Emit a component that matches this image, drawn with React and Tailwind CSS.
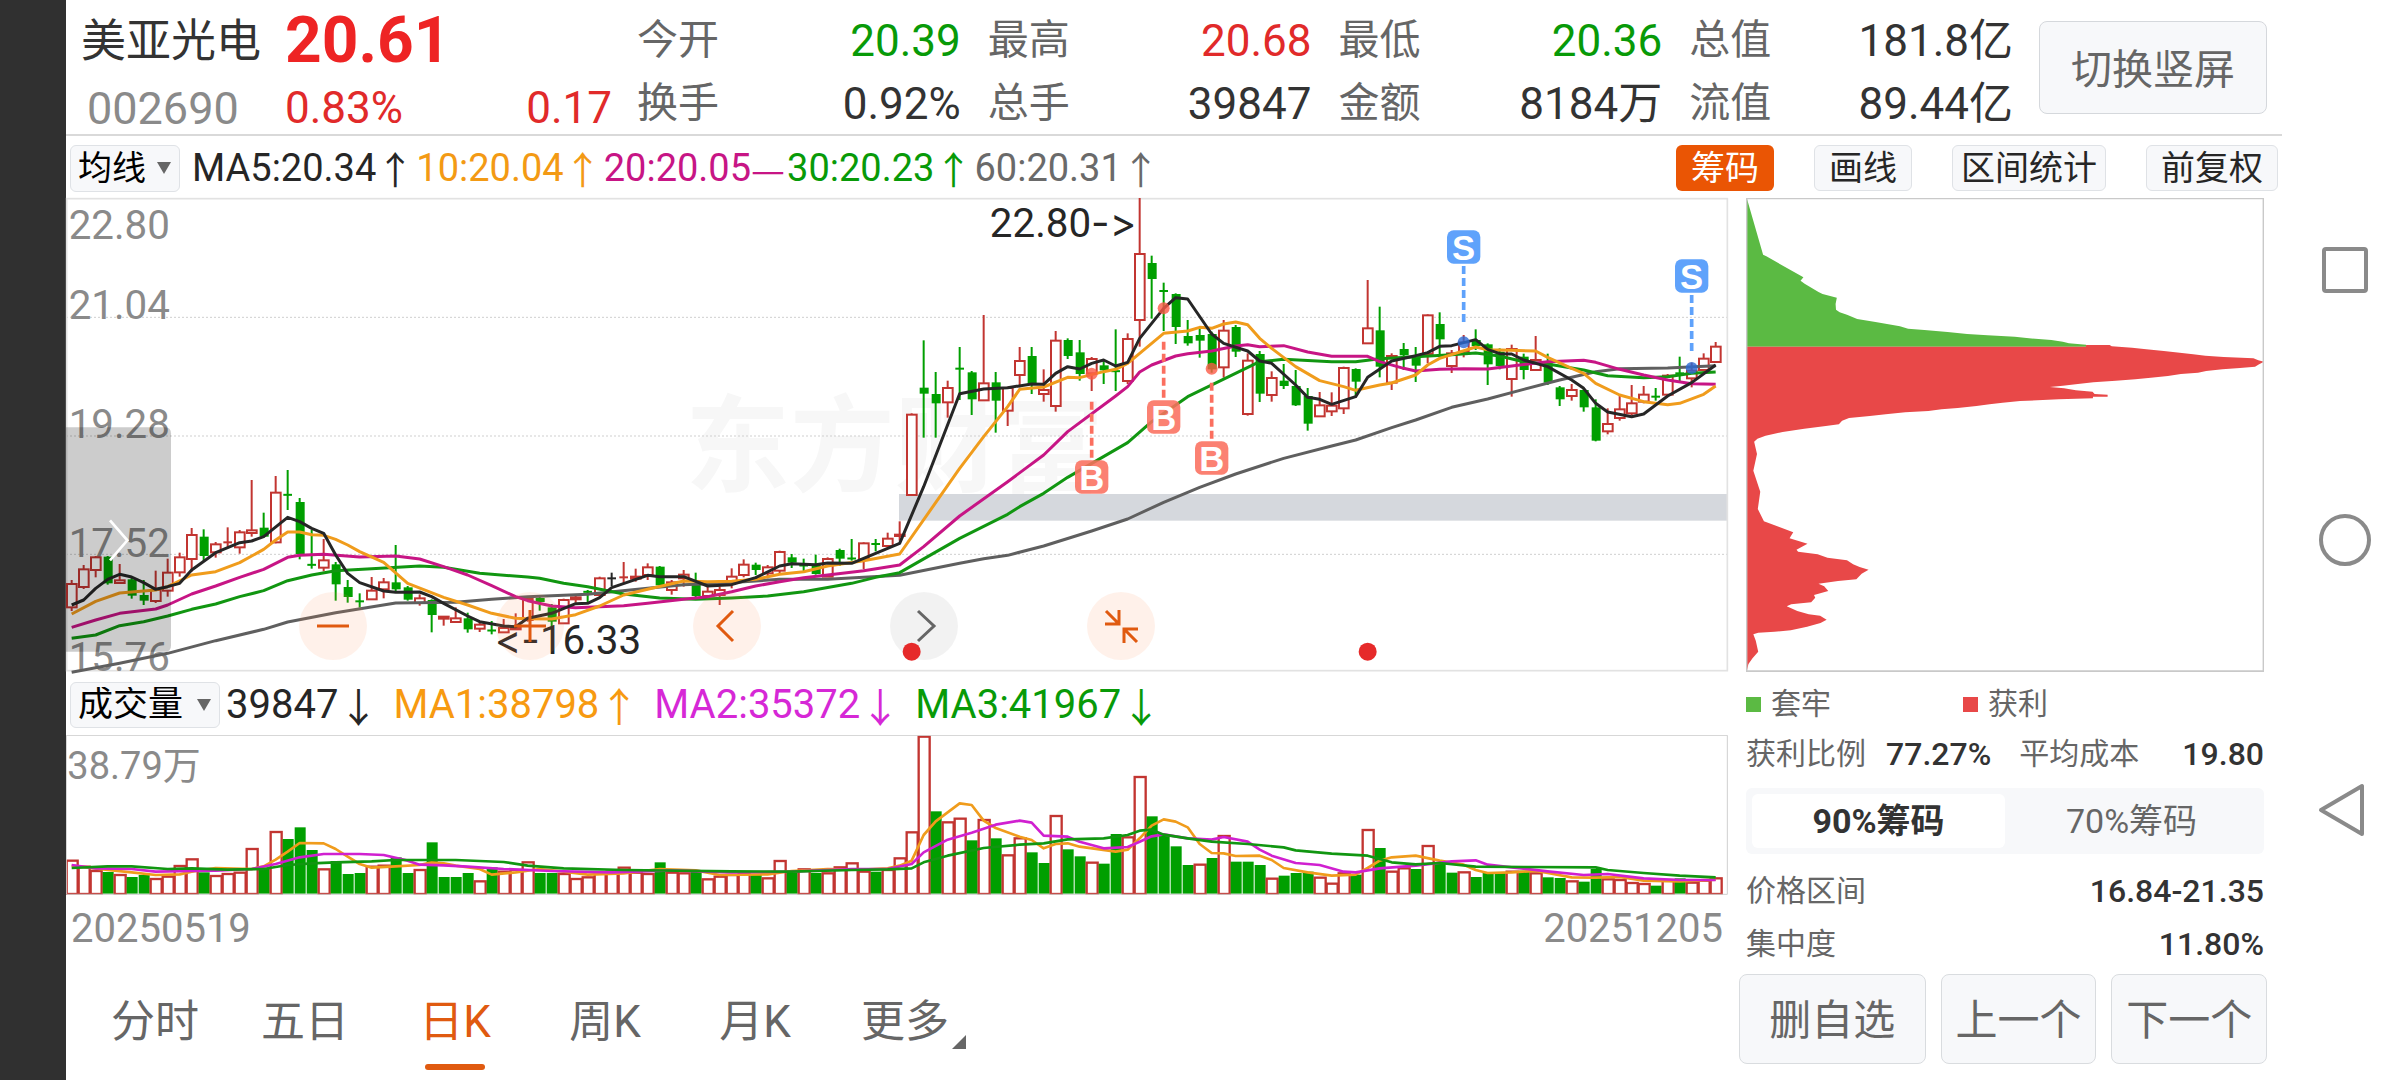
import React, { useState } from "react";

const RED = "#c23531";
const GREEN = "#009f00";
const INK = "#262626";

/* Candles: [colour, high, body top, body bottom, low]. The first block is measured from y = 726, the second from y = 6. */
const LOW_BLOCK = [
  ["r", 420, 430, 502, 513], ["r", 375, 386, 441, 447], ["r", 348, 350, 390, 412], ["g", 348, 350, 430, 434],
  ["r", 372, 419, 429, 430], ["g", 410, 418, 467, 476], ["g", 420, 465, 482, 495], ["r", 392, 448, 483, 489],
  ["r", 356, 396, 452, 470], ["r", 338, 350, 397, 410], ["r", 264, 283, 357, 395], ["g", 268, 290, 348, 362],
  ["r", 306, 311, 337, 353], ["r", 262, 305, 309, 320], ["r", 270, 275, 322, 341], ["r", 120, 269, 279, 290],
  ["g", 218, 263, 290, 292], ["r", 108, 156, 307, 310], ["g", 90, 163, 166, 210], ["g", 174, 186, 342, 358],
  ["g", 270, 372, 377, 386], ["r", 297, 359, 383, 394], ["g", 366, 373, 433, 482], ["g", 420, 441, 471, 488],
  ["g", 460, 482, 486, 503], ["r", 411, 450, 478, 480], ["r", 414, 425, 448, 475], ["g", 315, 427, 448, 455],
  ["g", 438, 442, 479, 482], ["r", 463, 473, 489, 497], ["g", 478, 480, 525, 577], ["r", 528, 528, 536, 557],
  ["r", 502, 533, 546, 548], ["g", 518, 535, 568, 578], ["r", 545, 552, 566, 576], ["g", 543, 569, 574, 583],
  ["r", 537, 562, 577, 577], ["r", 520, 560, 568, 568], ["r", 472, 475, 540, 545], ["g", 470, 474, 486, 512],
  ["g", 492, 502, 545, 560], ["r", 476, 478, 550, 552], ["r", 464, 470, 478, 488], ["g", 450, 453, 458, 487],
  ["r", 410, 413, 465, 470], ["k", 398, 413, 417, 438], ["r", 366, 410, 414, 430], ["r", 386, 408, 416, 425],
  ["r", 370, 380, 405, 420], ["g", 378, 380, 436, 440], ["r", 420, 425, 450, 464], ["r", 390, 402, 415, 440],
  ["g", 398, 435, 468, 472], ["r", 440, 453, 468, 473], ["r", 440, 448, 465, 495], ["r", 385, 408, 425, 445],
  ["r", 358, 372, 405, 412], ["g", 368, 374, 390, 405], ["r", 375, 380, 400, 415], ["r", 332, 334, 392, 405],
  ["g", 342, 352, 368, 384], ["g", 356, 375, 378, 395], ["g", 344, 375, 402, 404], ["r", 352, 355, 410, 410],
  ["g", 326, 330, 356, 378], ["g", 297, 354, 357, 362], ["r", 307, 308, 358, 388], ["g", 297, 310, 314, 334],
  ["r", 278, 294, 318, 322], ["r", 244, 282, 288, 302],
];
const HIGH_BLOCK = [
  ["r", 640, 642, 885, 886], ["g", 421, 563, 581, 713], ["g", 516, 582, 610, 713], ["r", 542, 562, 607, 653],
  ["g", 441, 504, 508, 600], ["g", 513, 517, 598, 645], ["r", 345, 548, 601, 603], ["g", 516, 547, 602, 698],
  ["r", 560, 562, 632, 678], ["r", 441, 481, 525, 562], ["g", 441, 468, 552, 582], ["r", 508, 568, 582, 605],
  ["r", 393, 420, 618, 635], ["g", 415, 420, 468, 477], ["g", 420, 457, 522, 542], ["r", 471, 475, 520, 573],
  ["g", 480, 496, 511, 552], ["g", 388, 512, 515, 573], ["r", 400, 415, 543, 552], ["r", -6, 160, 360, 440],
  ["g", 167, 189, 237, 356], ["g", 248, 271, 275, 393], ["g", 280, 282, 381, 432], ["g", 360, 408, 430, 437],
  ["g", 385, 405, 422, 473], ["g", 395, 402, 508, 518], ["r", 360, 390, 502, 533], ["g", 375, 381, 455, 471],
  ["r", 460, 480, 642, 647], ["g", 453, 462, 581, 606], ["r", 514, 532, 585, 605], ["g", 492, 542, 558, 567],
  ["g", 510, 558, 616, 618], ["g", 564, 588, 671, 692], ["r", 576, 614, 649, 650], ["r", 577, 615, 634, 648],
  ["r", 500, 502, 625, 642], ["g", 505, 507, 545, 590], ["r", 240, 383, 430, 432], ["g", 320, 391, 500, 532],
  ["r", 460, 466, 548, 570], ["g", 429, 447, 466, 510], ["g", 441, 472, 497, 546], ["r", 343, 344, 462, 490],
  ["g", 337, 372, 418, 465], ["r", 450, 458, 498, 519], ["r", 405, 425, 455, 472], ["g", 388, 420, 438, 450],
  ["g", 430, 433, 493, 555], ["g", 445, 455, 498, 508], ["r", 434, 445, 537, 590], ["g", 461, 470, 510, 538],
  ["r", 408, 478, 510, 512], ["g", 461, 490, 548, 555], ["g", 558, 562, 598, 618], ["r", 552, 568, 588, 602],
  ["g", 566, 570, 622, 635], ["g", 598, 622, 722, 724], ["r", 625, 670, 694, 703], ["r", 585, 626, 654, 662],
  ["r", 555, 608, 640, 645], ["r", 558, 582, 605, 610], ["g", 564, 588, 592, 602], ["r", 522, 525, 584, 586],
  ["g", 470, 518, 522, 545], ["r", 488, 510, 535, 562], ["r", 460, 474, 510, 515], ["r", 426, 438, 486, 488],
];
const shift = (rows, d) => rows.map(([c, ...v]) => [c, ...v.map((n) => n + d)]);
const CANDLES = [...shift(LOW_BLOCK, 726), ...shift(HIGH_BLOCK, 6)];

/* Moving averages: day index, value, day index, value ... in the same two blocks. */
const AVERAGES = [
  {
    color: "#5f5f5f",
    low: [0, 697, 4, 670, 8, 640, 12, 602, 16, 568, 18, 546, 22, 518, 27, 489, 32, 487, 35, 478, 38, 470, 43, 463, 48, 445, 51, 434, 54, 430, 59, 418, 63, 418],
    high: [69, 1126, 74, 1090, 76, 1076, 78, 1066, 81, 1038, 85, 993, 88, 957, 91, 907, 94, 862, 97, 822, 101, 775, 105, 738, 107, 720, 110, 683, 112, 660, 115, 622, 118, 597, 121, 568, 124, 540, 127, 515, 129, 506, 133, 504, 137, 497],
  },
  {
    color: "#119611",
    low: [0, 595, 2, 585, 4, 557, 6, 545, 8, 528, 10, 508, 12, 492, 14, 470, 16, 452, 18, 422, 20, 405, 22, 392, 25, 386, 29, 378, 31, 382, 34, 400, 38, 411, 39, 415, 41, 430, 43, 440, 46, 462, 49, 474, 52, 478, 55, 474, 58, 468, 61, 455, 65, 430, 67, 412],
    high: [69, 1118, 74, 1015, 78, 943, 79, 920, 81, 880, 83, 832, 88, 728, 90, 665, 93, 590, 99, 485, 101, 478, 105, 485, 107, 485, 109, 476, 112, 470, 115, 464, 117, 459, 119, 468, 121, 485, 123, 492, 126, 510, 128, 527, 131, 533, 133, 530, 135, 520, 137, 516],
  },
  {
    color: "#c71585",
    low: [0, 562, 2, 540, 4, 520, 7, 507, 8, 495, 10, 462, 12, 438, 14, 412, 16, 388, 18, 352, 19, 346, 21, 343, 24, 351, 27, 348, 29, 357, 31, 380, 33, 405, 35, 437, 37, 470, 38, 482, 40, 498, 42, 503, 46, 497, 48, 490, 51, 478, 53, 470, 55, 455, 57, 438, 59, 425, 61, 413, 63, 405, 66, 392],
    high: [69, 1095, 71, 1040, 74, 948, 78, 845, 81, 765, 83, 695, 87, 588, 88, 560, 89, 516, 90, 495, 92, 468, 93, 461, 95, 453, 97, 438, 98, 434, 99, 440, 101, 437, 103, 456, 105, 469, 108, 469, 109, 485, 111, 505, 112, 513, 114, 508, 116, 506, 118, 507, 120, 498, 123, 485, 126, 481, 127, 487, 129, 508, 131, 525, 133, 540, 135, 551, 137, 553],
  },
  {
    color: "#f09c1c",
    low: [0, 522, 2, 484, 4, 459, 7, 450, 8, 440, 10, 405, 12, 395, 14, 368, 16, 328, 17, 300, 18, 276, 19, 276, 20, 284, 21, 286, 22, 298, 23, 315, 24, 335, 26, 367, 28, 430, 31, 472, 33, 495, 35, 520, 37, 535, 38, 536, 40, 537, 42, 524, 44, 498, 46, 465, 48, 448, 51, 423, 53, 425, 55, 424, 57, 418, 59, 403, 61, 395, 63, 378, 66, 362],
    high: [69, 1062, 74, 805, 76, 710, 78, 620, 79, 568, 81, 561, 83, 532, 84, 533, 86, 515, 87, 508, 88, 490, 91, 400, 93, 393, 94, 382, 95, 385, 96, 372, 97, 366, 98, 374, 99, 415, 100, 445, 102, 500, 104, 542, 106, 560, 107, 571, 109, 555, 110, 549, 112, 525, 113, 495, 114, 475, 117, 441, 118, 449, 120, 451, 122, 453, 123, 472, 125, 505, 126, 520, 127, 550, 129, 585, 131, 605, 133, 614, 134, 610, 136, 583, 137, 558],
  },
  {
    color: INK,
    low: [0, 495, 1, 480, 2, 445, 3, 418, 4, 403, 5, 411, 6, 428, 7, 448, 8, 440, 9, 430, 10, 390, 12, 338, 14, 308, 15, 303, 16, 290, 18, 232, 19, 245, 20, 265, 21, 280, 22, 345, 23, 400, 24, 428, 26, 453, 27, 457, 29, 456, 30, 470, 31, 490, 33, 528, 34, 545, 36, 558, 37, 560, 38, 535, 40, 520, 42, 491, 43, 490, 44, 473, 45, 443, 48, 406, 49, 410, 51, 410, 53, 438, 55, 434, 57, 413, 59, 378, 60, 371, 62, 374, 63, 369, 65, 370, 66, 355],
    high: [69, 1030, 71, 860, 74, 581, 76, 567, 78, 563, 80, 552, 81, 553, 82, 520, 83, 500, 84, 507, 85, 490, 86, 480, 87, 498, 88, 487, 89, 415, 91, 325, 92, 293, 93, 297, 95, 402, 96, 430, 98, 453, 99, 483, 100, 490, 102, 555, 103, 592, 104, 598, 105, 613, 107, 590, 108, 532, 110, 483, 112, 467, 113, 458, 114, 439, 115, 437, 117, 419, 118, 448, 119, 461, 120, 462, 121, 480, 123, 500, 125, 540, 126, 565, 127, 610, 128, 636, 130, 650, 131, 642, 133, 588, 135, 548, 137, 495],
  },
];

const dayX = (i) => 17 + 36 * i;
const trace = (list, d) => {
  const out = [];
  for (let k = 0; k < list.length; k += 2) out.push(dayX(list[k]) + "," + (list[k + 1] + d));
  return out.join(" ");
};

/* Volume bar tops; the two blocks are measured from y = -198 and y = -78. */
const VOLUME_LOW = "r572 r590 r603 g609 r615 g624 g618 r627 r620 r588 r568 g610 r618 r612 r608 r537 g600 r486 g510 g475 g543 r598 g576 g615 g612 r590 r587 g565 g612 r600 g520 g624 g624 g612 r634 g595 r605 r600 r577 g612 g612 r612 r627 r622 r610 r605 r593 r608 r612 g580 r608 r610 g605 r628 r620 r615 r612 g615 r625 r573 g610 r598 g612 r610 r592 r580 r605 g608 r600 r565".split(" ");
const VOLUME_HIGH = "r367 r80 g307 r337 r326 g394 r330 g388 r436 r385 g430 g462 r318 g421 g442 r458 g464 g375 r382 r201 g322 g378 g412 g468 r464 g447 r378 g458 g458 g468 r506 g500 g492 g488 r503 r521 r490 g497 r360 g417 r485 r475 g480 r408 g463 g491 r487 g504 g491 g490 r485 g485 r490 g505 g507 r514 g518 g480 r508 r510 r519 r522 g530 r510 g508 r518 r512 r505".split(" ");
const VOLUMES = [
  ...VOLUME_LOW.map((s) => [s[0], Number(s.slice(1)) - 198]),
  ...VOLUME_HIGH.map((s) => [s[0], Number(s.slice(1)) - 78]),
];
const VOLUME_AVERAGES = [
  {
    color: "#f09c1c",
    low: [0, 590, 3, 603, 5, 610, 7, 618, 9, 616, 10, 608, 12, 597, 15, 600, 16, 592, 17, 572, 18, 548, 19, 522, 21, 523, 22, 540, 23, 563, 24, 585, 25, 596, 27, 592, 29, 588, 30, 580, 31, 583, 32, 590, 34, 600, 35, 617, 37, 610, 39, 600, 41, 608, 43, 617, 46, 613, 49, 600, 52, 604, 54, 618, 58, 616, 60, 606, 63, 600, 66, 602, 68, 598],
    high: [69, 470, 70, 455, 71, 378, 72, 337, 74, 283, 75, 288, 76, 335, 77, 357, 79, 383, 80, 393, 81, 418, 82, 405, 83, 403, 84, 413, 87, 428, 88, 422, 89, 388, 90, 350, 91, 331, 92, 338, 93, 355, 94, 405, 95, 432, 96, 433, 97, 441, 99, 440, 100, 453, 101, 477, 103, 490, 105, 500, 107, 497, 108, 477, 109, 455, 110, 445, 112, 440, 114, 455, 116, 467, 117, 483, 118, 492, 120, 490, 122, 486, 123, 492, 125, 505, 127, 506, 129, 504, 131, 515, 134, 517, 137, 512],
  },
  {
    color: "#d020d0",
    low: [0, 588, 2, 598, 5, 600, 7, 608, 10, 606, 12, 605, 15, 600, 17, 585, 19, 565, 21, 555, 24, 555, 26, 558, 28, 575, 29, 587, 31, 589, 33, 593, 36, 600, 40, 606, 45, 610, 50, 604, 55, 610, 60, 608, 65, 600, 68, 600],
    high: [70, 465, 71, 430, 73, 392, 75, 371, 77, 347, 79, 335, 80, 341, 81, 380, 83, 383, 84, 398, 86, 418, 88, 414, 89, 398, 90, 382, 91, 376, 93, 388, 95, 392, 96, 384, 98, 398, 99, 422, 100, 440, 102, 462, 104, 468, 106, 488, 107, 490, 109, 478, 112, 470, 115, 457, 117, 454, 118, 467, 120, 475, 123, 487, 126, 498, 128, 495, 131, 508, 134, 513, 137, 513],
  },
  {
    color: "#119611",
    low: [0, 597, 3, 592, 5, 592, 8, 600, 10, 598, 13, 602, 16, 600, 18, 588, 20, 583, 22, 580, 25, 577, 27, 573, 32, 573, 36, 579, 38, 590, 41, 598, 46, 603, 55, 607, 60, 608, 65, 603, 68, 601],
    high: [70, 478, 71, 460, 73, 440, 76, 417, 79, 407, 81, 403, 83, 391, 86, 388, 88, 378, 89, 365, 90, 362, 91, 377, 93, 388, 95, 398, 98, 405, 101, 415, 102, 424, 105, 434, 108, 440, 110, 460, 112, 466, 114, 462, 117, 473, 121, 474, 127, 475, 128, 483, 131, 492, 134, 500, 137, 505],
  },
];

const AXIS = [["22.80", 123], ["21.04", 364], ["19.28", 719], ["17.52", 1076], ["15.76", 1418]];

const TRADES = [
  { day: 85, label: "B", box: 837, dot: 527, from: 611, to: 784 },
  { day: 91, label: "B", box: 657, dot: 331, from: 431, to: 604 },
  { day: 95, label: "B", box: 780, dot: 512, from: 554, to: 727 },
  { day: 116, label: "S", box: 147, dot: 433, from: 204, to: 374 },
  { day: 135, label: "S", box: 234, dot: 510, from: 291, to: 461 },
];

function Candle({ row, i }) {
  const [c, high, top, bottom, low] = row;
  const x = dayX(i);
  const color = c === "r" ? RED : c === "g" ? GREEN : INK;
  const flat = bottom - top < 6;
  const hollow = c === "r" && !flat;
  return (
    <g stroke={color} strokeWidth="6" fill={hollow ? "#fff" : color}>
      <line x1={x} x2={x} y1={high} y2={low} />
      {flat ? (
        <line x1={x - 13} x2={x + 13} y1={(top + bottom) / 2} y2={(top + bottom) / 2} />
      ) : hollow ? (
        <rect x={x - 14} y={top + 2} width="29" height={bottom - top - 2} />
      ) : (
        <rect x={x - 12} y={top} width="27" height={bottom - top} stroke="none" />
      )}
    </g>
  );
}

function PriceChart() {
  return (
    <svg viewBox="0 0 4986 1422" className="block h-auto w-full overflow-visible" role="img" aria-label="日K线图">
      <g fill="#f7f7f7" fontSize="314" fontWeight="700" fontFamily="'Noto Sans CJK SC', sans-serif">
        <text x="1858" y="856">东方财富</text>
      </g>
      <rect x="2499" y="888" width="2487" height="80" fill="#d5d8dd" />
      <g stroke="#cfcfcf" strokeWidth="3" strokeDasharray="6 6">
        {[358, 714, 1069].map((y) => <line key={y} x1="0" x2="4986" y1={y} y2={y} />)}
      </g>
      <rect x="2" y="2" width="4982" height="1416" fill="none" stroke="#e2e2e2" strokeWidth="5" />
      <g fill="#8a8a8a" fontSize="121" fontFamily="Roboto, sans-serif">
        {AXIS.map(([t, y]) => <text key={t} x="8" y={y}>{t}</text>)}
      </g>
      {CANDLES.map((row, i) => <Candle key={i} row={row} i={i} />)}
      <g fill="none" strokeWidth="9" strokeLinejoin="round">
        {AVERAGES.map((a) => (
          <polyline key={a.color} stroke={a.color} points={trace(a.low, 726) + " " + trace(a.high, 6)} />
        ))}
      </g>
      <g fill={INK} fontSize="121" fontFamily="Roboto, sans-serif" className="[font-variant-ligatures:none]">
        <text x="3211" y="116" textAnchor="end">22.80<tspan fontFamily="Inter, sans-serif">-&gt;</tspan></text>
        <text x="1286" y="1368"><tspan fontFamily="Inter, sans-serif">&lt;-</tspan>16.33</text>
      </g>
      {TRADES.map((t) => {
        const x = dayX(t.day);
        const sell = t.label === "S";
        const color = sell ? "#5fa2fb" : "#fb6f5f";
        return (
          <g key={t.day}>
            <circle cx={x} cy={t.dot} r="18" fill={sell ? "#2c6ad4" : "#fb5a46"} fillOpacity="0.8" />
            <line x1={x} x2={x} y1={t.from} y2={t.to} stroke={color} strokeWidth="11" strokeDasharray="24 12" />
            <rect x={x - 50} y={t.box - 50} width="100" height="100" rx="20" fill={color} fillOpacity={sell ? 1 : 0.88} />
            <text x={x} y={t.box + 38} fill="#fff" fontSize="104" fontWeight="700" textAnchor="middle" fontFamily="'Liberation Sans', sans-serif">
              {t.label}
            </text>
          </g>
        );
      })}
      <path d="M0 688H297Q315 688 315 706V1343Q315 1361 297 1361H0Z" fill="#000" fillOpacity="0.2" />
      <path d="M132 967L184 1027L132 1087" fill="none" stroke="#fff" strokeWidth="8" />
    </svg>
  );
}

function ChartEvents() {
  return (
    <svg viewBox="0 0 4986 1422" className="pointer-events-none absolute inset-0 h-full w-full" aria-hidden="true">
      <circle cx={dayX(70)} cy="1361" r="27" fill="#e62a2a" />
      <circle cx={dayX(108)} cy="1361" r="27" fill="#e62a2a" />
    </svg>
  );
}

const CONTROLS = [
  { name: "缩小", d: "M18 34H50" },
  { name: "放大", d: "M18 34H50M34 18V50" },
  { name: "左移", d: "M40 19L25 34L40 49" },
  { name: "右移", d: "M28 19L44 34L28 49", grey: true },
  { name: "收起", d: "M19 19L32 32M32 18V32H18M50 50L37 37M37 51V37H51" },
];

function ChartControls() {
  return (
    <div className="absolute bottom-3 left-[14%] flex gap-[129px]">
      {CONTROLS.map((c) => (
        <button
          key={c.name}
          aria-label={c.name}
          className={"size-[68px] rounded-full " + (c.grey ? "bg-black/5 text-[#666]" : "bg-[#ff8a50]/12 text-[#e05a10]")}
        >
          <svg viewBox="0 0 68 68" className="size-full" fill="none" stroke="currentColor" strokeWidth="3">
            <path d={c.d} />
          </svg>
        </button>
      ))}
    </div>
  );
}

function VolumeChart() {
  return (
    <svg viewBox="0 0 4986 480" className="block h-auto w-full" role="img" aria-label="成交量图">
      <text x="4" y="132" fill="#8a8a8a" fontSize="114" fontFamily="Roboto, 'Noto Sans CJK SC', sans-serif">38.79万</text>
      {VOLUMES.map(([c, top], i) => {
        const x = dayX(i);
        return c === "r" ? (
          <rect key={i} x={x - 15} y={top + 3} width="33" height={474 - top} fill="#fff" stroke={RED} strokeWidth="7" />
        ) : (
          <rect key={i} x={x - 15} y={top} width="33" height={476 - top} fill={GREEN} />
        );
      })}
      <g fill="none" strokeWidth="8" strokeLinejoin="round">
        {VOLUME_AVERAGES.map((a) => (
          <polyline key={a.color} stroke={a.color} points={trace(a.low, -198) + " " + trace(a.high, -78)} />
        ))}
      </g>
      <path d="M1 1H4984V478H1Z" fill="none" stroke="#cfcfcf" strokeWidth="3" />
    </svg>
  );
}

function ChipChart() {
  return (
    <svg viewBox="62 27 1272 1422" preserveAspectRatio="none" className="block h-[474px] w-full" role="img" aria-label="筹码分布">
      <path
        fill="#5bba43"
        d="M64 28L104 197L112 202L203 265L196 275L206 284L240 309L250 315L285 326L282 345L283 362L292 370L310 377L335 390L380 399L440 412L460 419L500 423L557 429L605 435L655 439L722 443L757 448L812 453L840 458L855 463L897 467V473H64Z"
      />
      <path
        fill="#e84848"
        d="M64 473H897V468H955L960 472L1010 476L1045 481L1088 486L1127 491L1160 496L1190 500L1235 504L1308 508L1320 514L1334 518L1322 526L1312 533L1275 537L1232 541L1192 546L1172 551L1130 555L1098 561L1056 566L1018 571L970 575L915 580L877 585L840 590L808 594L843 598L872 604L913 608L918 615L950 617V623H914V628L830 631L735 636L692 641L660 646L628 651L582 657L542 661L510 666L453 670L405 676L366 681L315 687L298 695L290 706L258 711L205 719L152 729L110 740L90 749L82 758L89 795L80 845L97 908L91 960L106 997L178 1030L169 1048L213 1064L186 1082L190 1088L238 1096L262 1106L310 1114L325 1126L341 1134L363 1142L346 1154L333 1171L288 1176L240 1184L254 1192L264 1206L229 1218L232 1226L222 1240L173 1246L162 1252L188 1266L216 1276L244 1280L260 1292L245 1302L212 1313L172 1324L132 1328L92 1331L80 1336L86 1355L92 1388L78 1408L68 1425L64 1446Z"
      />
      <path d="M63 28H1333V1447H63Z" fill="none" stroke="#c9c9c9" strokeWidth="2" vectorEffect="non-scaling-stroke" />
    </svg>
  );
}

function Picker({ label, options, className }) {
  return (
    <label className={"relative flex items-center rounded-md border border-[#dfe2e6] bg-[#f7f8fa] " + className}>
      <select aria-label={label} className="w-full cursor-pointer appearance-none bg-transparent pl-[7px] outline-none">
        {options.map((o) => <option key={o}>{o}</option>)}
      </select>
      <svg viewBox="0 0 14 12" className="pointer-events-none absolute right-2 h-3 w-3.5" fill="#666" aria-hidden="true">
        <path d="M0 0H14L7 12Z" />
      </svg>
    </label>
  );
}

const STATS = [
  [["今开", "20.39", "text-[#089a08]"], ["换手", "0.92%", "text-[#333]"]],
  [["最高", "20.68", "text-[#e12a2a]"], ["总手", "39847", "text-[#333]"]],
  [["最低", "20.36", "text-[#089a08]"], ["金额", "8184万", "text-[#333]"]],
  [["总值", "181.8亿", "text-[#333]"], ["流值", "89.44亿", "text-[#333]"]],
];

function Header() {
  return (
    <header className="flex h-[136px] items-start border-b-2 border-[#d9d9d9] pr-[15px] pl-[15px] text-[44px] leading-none">
      <div className="grid w-[531px] grid-cols-[204px_1fr] pt-2.5">
        <h1 className="flex h-[62px] items-center text-[45px] text-[#333]">美亚光电</h1>
        <strong className="flex h-[62px] items-center text-[64px] font-bold text-[#ee2424]">20.61</strong>
        <span className="flex h-[72px] items-center pl-1.5 text-[45px] text-[#8a8a8a]">002690</span>
        <span className="flex h-[72px] items-center justify-between text-[#e12a2a]">
          <span>0.83%</span>
          <span>0.17</span>
        </span>
      </div>
      <dl className="ml-[25px] flex flex-1 gap-[27px] pt-[9px]">
        {STATS.map((group) => (
          <div key={group[0][0]} className="flex-1">
            {group.map(([label, value, tone]) => (
              <div key={label} className="flex h-[63px] items-center justify-between">
                <dt className="text-[41px] text-[#666]">{label}</dt>
                <dd className={tone}>{value}</dd>
              </div>
            ))}
          </div>
        ))}
      </dl>
      <button className="mt-[21px] ml-[26px] h-[93px] w-[228px] rounded-lg border border-[#d5d8dc] bg-[#f7f8fa] pt-1.5 text-[41px] text-[#666]">
        切换竖屏
      </button>
    </header>
  );
}

const MA_LEGEND = [
  ["MA5:20.34", "↑", "text-[#262626]"],
  ["10:20.04", "↑", "text-[#f39a14]"],
  ["20:20.05", "—", "text-[#c71585]"],
  ["30:20.23", "↑", "text-[#089a08]"],
  ["60:20.31", "↑", "text-[#6a6a6a]"],
];
const VOLUME_LEGEND = [
  ["39847", "↓", "text-[#262626]"],
  ["MA1:38798", "↑", "text-[#f79a10]"],
  ["MA2:35372", "↓", "text-[#d628d6]"],
  ["MA3:41967", "↓", "text-[#089a08]"],
];

function Legend({ items, className }) {
  return (
    <div className={"flex whitespace-nowrap " + className}>
      {items.map(([text, mark, tone]) => (
        <span key={text} className={"flex " + tone}>
          {text}
          <span className="font-['Noto_Sans_CJK_SC',sans-serif]">{mark}</span>
        </span>
      ))}
    </div>
  );
}

function Toolbar() {
  const tool = "h-[46px] rounded-md whitespace-nowrap ";
  const plain = tool + "border border-[#dfe2e6] bg-[#f7f8fa] text-[#262626]";
  return (
    <div className="flex h-[62px] items-center pt-0.5 pr-1 pl-1 text-[34px] leading-none">
      <Picker label="主图指标" options={["均线", "BOLL"]} className="h-[47px] w-[110px]" />
      <Legend items={MA_LEGEND} className="ml-3 gap-0.5 text-[38px]" />
      <div className="ml-auto flex items-center gap-10">
        <button className={tool + "bg-[#ea5504] px-[15px] text-white"}>筹码</button>
        <button className={plain + " px-3.5"}>画线</button>
        <button className={plain + " px-2"}>区间统计</button>
        <button className={plain + " px-3.5"}>前复权</button>
      </div>
    </div>
  );
}

const TABS = ["分时", "五日", "日K", "周K", "月K", "更多"];

function PeriodTabs() {
  const [active, setActive] = useState("日K");
  return (
    <nav className="flex h-[117px] pl-[14px] text-[44px] leading-none">
      {TABS.map((t) => (
        <button
          key={t}
          onClick={() => setActive(t)}
          className={"relative flex w-[150px] items-center justify-center " + (t === active ? "text-[#e05a10]" : "text-[#666]")}
        >
          {t}
          {t === "更多" && (
            <svg viewBox="0 0 14 14" className="absolute right-3.5 bottom-[31px] size-3.5" fill="#666" aria-hidden="true">
              <path d="M14 0V14H0Z" />
            </svg>
          )}
          {t === active && <span className="absolute bottom-2.5 h-1.5 w-[60px] rounded-full bg-[#e05a10]" />}
        </button>
      ))}
    </nav>
  );
}

function ChipPanel() {
  const [range, setRange] = useState("90%筹码");
  const bold = "text-[32px] font-medium text-[#333]";
  return (
    <div className="px-[18px] text-[30px] leading-none text-[#666]">
      <ChipChart />
      <div className="grid h-16 grid-cols-[217px_1fr] items-center">
        <span className="flex items-center gap-2.5"><i className="size-[15px] bg-[#5bba43]" />套牢</span>
        <span className="flex items-center gap-2.5"><i className="size-[15px] bg-[#e84848]" />获利</span>
      </div>
      <div className="flex h-9 items-center">
        <span>获利比例</span>
        <span className={"ml-5 " + bold}>77.27%</span>
        <span className="ml-7">平均成本</span>
        <span className={"ml-auto " + bold}>19.80</span>
      </div>
      <div className="mt-4 flex h-[66px] rounded-md bg-[#f7f8fa] p-1.5 text-[34px]">
        {["90%筹码", "70%筹码"].map((r) => (
          <button
            key={r}
            onClick={() => setRange(r)}
            className={"flex-1 rounded-md " + (r === range ? "bg-white font-bold text-[#333]" : "")}
          >
            {r}
          </button>
        ))}
      </div>
      <div className="flex h-[74px] items-center justify-between">
        <span>价格区间</span>
        <span className={bold}>16.84-21.35</span>
      </div>
      <div className="flex h-8 items-center justify-between">
        <span>集中度</span>
        <span className={bold}>11.80%</span>
      </div>
    </div>
  );
}

function StockActions() {
  const box = "h-[90px] rounded-lg border border-[#d9dcdf] bg-[#f7f8fa] pt-1";
  return (
    <div className="mt-3.5 grid grid-cols-[6fr_5fr_5fr] gap-[15px] pr-[15px] pl-[11px] text-[42px] leading-none text-[#666]">
      <button className={box}>删自选</button>
      <button className={box}>上一个</button>
      <button className={box}>下一个</button>
    </div>
  );
}

function SystemNav() {
  const icon = "size-[54px]";
  const props = { viewBox: "0 0 54 54", fill: "none", stroke: "#8a8a8a", strokeWidth: 4, strokeLinejoin: "round" };
  return (
    <nav className="flex w-[126px] flex-col items-center justify-around py-[135px]">
      <button aria-label="最近任务"><svg {...props} className={icon}><rect x="6" y="6" width="42" height="42" rx="2" /></svg></button>
      <button aria-label="主页"><svg {...props} className={icon}><circle cx="27" cy="27" r="24" /></svg></button>
      <button aria-label="返回"><svg {...props} className={icon}><path d="M44 3V51L3 27Z" /></svg></button>
    </nav>
  );
}

export default function App() {
  return (
    <div className="flex min-h-screen bg-white font-[Roboto,'Noto_Sans_CJK_SC',sans-serif]">
      <div className="w-[66px] bg-[#303030]" />
      <main className="min-w-0 flex-1">
        <Header />
        <Toolbar />
        <div className="grid grid-cols-[minmax(0,1fr)_554px]">
          <section>
            <div className="relative">
              <PriceChart />
              <ChartControls />
              <ChartEvents />
            </div>
            <div className="flex h-[63px] items-center pt-0.5 pl-1 leading-none">
              <Picker label="副图指标" options={["成交量", "MACD"]} className="h-[46px] w-[150px] text-[35px]" />
              <Legend items={VOLUME_LEGEND} className="ml-1.5 gap-[15px] text-[40px]" />
            </div>
            <VolumeChart />
            <div className="flex h-[68px] items-center justify-between px-[5px] text-[40px] leading-none text-[#8a8a8a]">
              <time>20250519</time>
              <time>20251205</time>
            </div>
            <PeriodTabs />
          </section>
          <section>
            <ChipPanel />
            <StockActions />
          </section>
        </div>
      </main>
      <SystemNav />
    </div>
  );
}
